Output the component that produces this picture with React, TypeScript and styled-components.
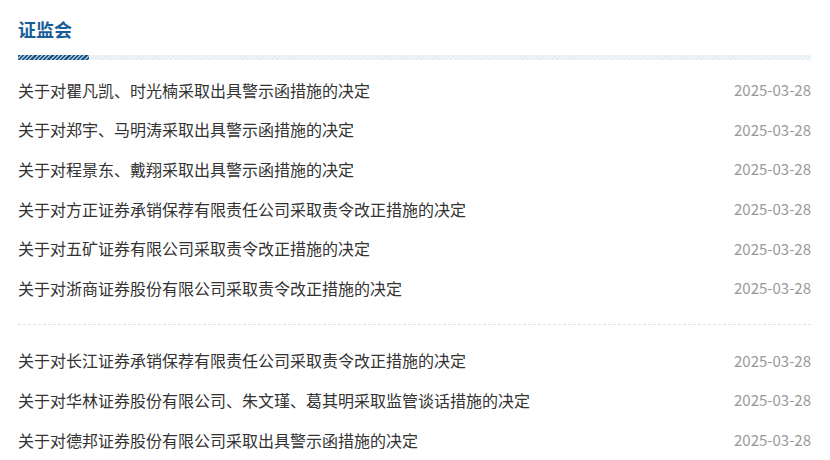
import React from 'react';
import styled, { createGlobalStyle } from 'styled-components';

const GlobalStyle = createGlobalStyle`
  html, body {
    margin: 0;
    padding: 0;
    background: #fff;
  }
  body {
    font-family: "Noto Sans CJK SC", "Noto Sans", sans-serif;
  }
`;

const Panel = styled.div`
  width: 793px;
  padding: 16px 19px 0 18px;
`;

const Heading = styled.h2`
  margin: 0;
  font-size: 18px;
  line-height: 26px;
  font-weight: bold;
  color: #1b5d98;
`;

const Rule = styled.div`
  display: flex;
  height: 5px;
  margin-top: 13px;
  margin-bottom: 10px;
`;

const RuleAccent = styled.div`
  width: 71px;
  background: repeating-linear-gradient(
    135deg,
    #1a5585 0,
    #1a5585 1.5px,
    #9fbdd3 1.5px,
    #9fbdd3 3px
  );
`;

const RuleTrack = styled.div`
  flex: 1;
  background: repeating-linear-gradient(
    135deg,
    #e4edf2 0,
    #e4edf2 1.5px,
    #f2f6f8 1.5px,
    #f2f6f8 3px
  );
`;

const List = styled.ul`
  margin: 0;
  padding: 0;
  list-style: none;
`;

const Row = styled.li`
  display: flex;
  align-items: center;
  justify-content: space-between;
  height: 39.6px;
`;

const Title = styled.a`
  font-size: 16px;
  color: #333;
  text-decoration: none;
`;

const Date = styled.span`
  font-size: 15px;
  color: #999;
`;

const Divider = styled.div`
  border-top: 1px dashed #dde3e8;
  margin: 16px 0 16px;
`;

const groups = [
  [
    '关于对瞿凡凯、时光楠采取出具警示函措施的决定',
    '关于对郑宇、马明涛采取出具警示函措施的决定',
    '关于对程景东、戴翔采取出具警示函措施的决定',
    '关于对方正证券承销保荐有限责任公司采取责令改正措施的决定',
    '关于对五矿证券有限公司采取责令改正措施的决定',
    '关于对浙商证券股份有限公司采取责令改正措施的决定',
  ],
  [
    '关于对长江证券承销保荐有限责任公司采取责令改正措施的决定',
    '关于对华林证券股份有限公司、朱文瑾、葛其明采取监管谈话措施的决定',
    '关于对德邦证券股份有限公司采取出具警示函措施的决定',
  ],
];

const App = () => (
  <>
    <GlobalStyle />
    <Panel>
      <Heading>证监会</Heading>
      <Rule>
        <RuleAccent />
        <RuleTrack />
      </Rule>
      {groups.map((items, i) => (
        <React.Fragment key={i}>
          {i > 0 && <Divider />}
          <List>
            {items.map((title) => (
              <Row key={title}>
                <Title href="#">{title}</Title>
                <Date>2025-03-28</Date>
              </Row>
            ))}
          </List>
        </React.Fragment>
      ))}
    </Panel>
  </>
);

export default App;
